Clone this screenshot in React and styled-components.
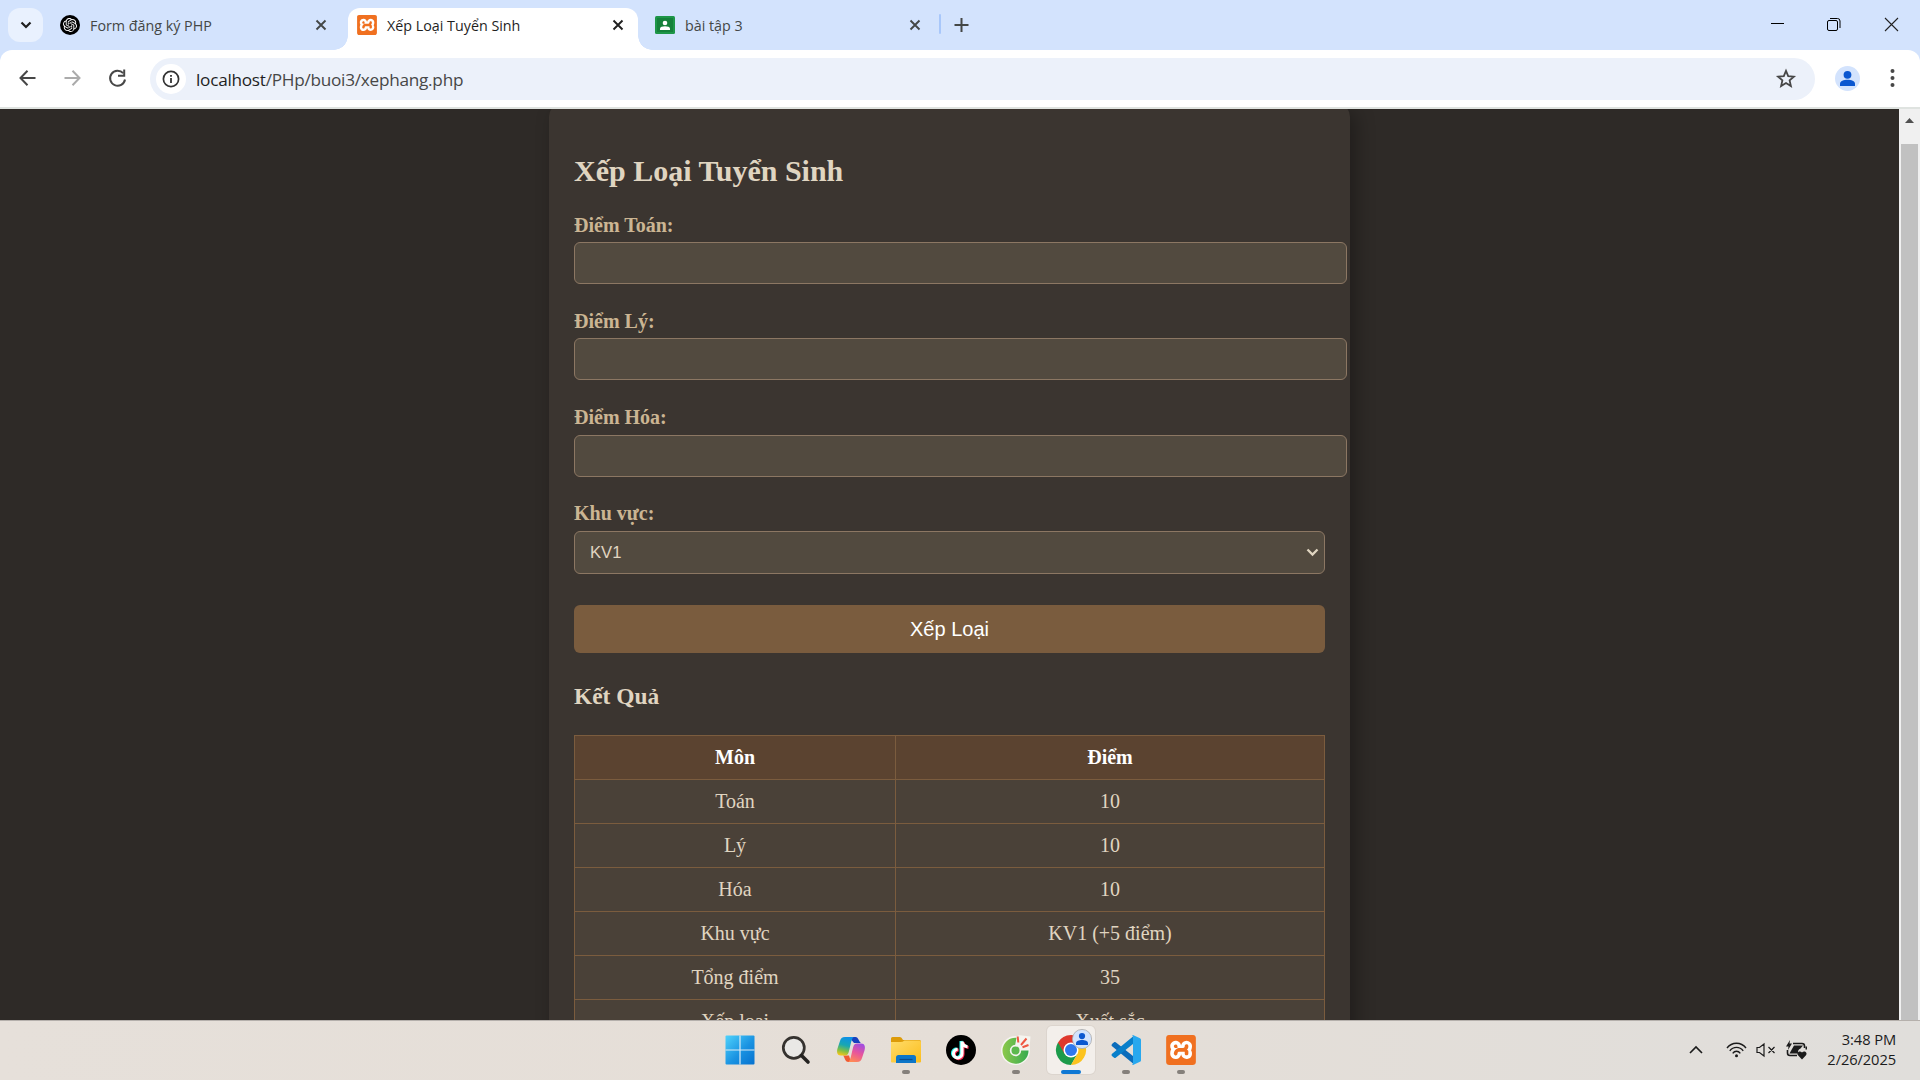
import React from 'react';
import styled, { createGlobalStyle } from 'styled-components';
import { SiOpenai, SiXampp } from 'react-icons/si';

const Global = createGlobalStyle`
  * { box-sizing: border-box; }
  body { margin: 0; overflow: hidden; }
`;
const ui = `"Open Sans", "Noto Sans", sans-serif`;
const serif = `"Liberation Serif", "Times New Roman", serif`;

const Screen = styled.div`
  width: 1920px; height: 1080px; display: flex; flex-direction: column; overflow: hidden;
  background: #d3e3fd; font-family: ${ui};
`;
const TabStrip = styled.header`
  height: 50px; flex: none; display: flex; align-items: flex-start; padding-left: 8px; background: #d3e3fd;
`;
const TabSearch = styled.button`
  width: 35px; height: 34px; margin: 8px 7px 0 0; padding: 0; border: 0; border-radius: 12px; background: #e9f1fe;
  display: flex; align-items: center; justify-content: center;
`;
const Tab = styled.div`
  position: relative; width: ${p => p.$w}px; height: 42px; margin-top: 8px; padding: 0 ${p => p.$end}px 8px ${p => p.$start}px;
  display: flex; align-items: center; border-radius: 12px 12px 0 0;
  background: ${p => (p.$active ? '#fff' : 'transparent')}; color: ${p => (p.$active ? '#1f1f1f' : '#444746')};
  &::before, &::after {
    content: ''; display: ${p => (p.$active ? 'block' : 'none')}; position: absolute; bottom: 0; width: 14px; height: 14px;
  }
  &::before { left: -14px; background: radial-gradient(circle at 0 0, transparent 13.5px, #fff 14px); }
  &::after { right: -14px; background: radial-gradient(circle at 100% 0, transparent 13.5px, #fff 14px); }
`;
const TabTitle = styled.span`
  flex: 1; margin-left: 10px; font-size: 14.3px; line-height: 20px; white-space: nowrap; padding-top: 1px;
`;
const Divider = styled.i`width: 2px; height: 20px; margin: 14px 0 0 0; background: #a8c7fa; border-radius: 1px;`;
const NewTab = styled.div`margin: 17px 0 0 13px; height: 16px; display: flex;`;
const WindowControls = styled.div`
  margin-left: auto; height: 50px; display: flex; align-items: flex-start; gap: 42px; padding: 17px 21px 0 0;
`;
const Toolbar = styled.nav`
  height: 59px; flex: none; display: flex; align-items: center; padding: 0 17px 2px 15px; background: #fff;
  border-bottom: 2px solid #dfe3e0; border-radius: 12px 12px 0 0;
`;
const NavIcons = styled.div`display: flex; gap: 20px; align-items: center; width: 135px;`;
const Omnibox = styled.div`
  width: 1665px; height: 42px; margin-top: 3px; border-radius: 21px; background: #ecf1fa; display: flex; align-items: center;
  padding: 0 18px 0 6px;
`;
const SiteInfo = styled.span`
  width: 30px; height: 30px; border-radius: 50%; background: #fff; display: flex; align-items: center; justify-content: center;
`;
const Url = styled.span`
  flex: 1; margin-left: 10px; font-size: 17.2px; letter-spacing: -0.26px; color: #474747; padding-top: 1px; b { font-weight: 400; color: #1f1f1f; }
`;
const Profile = styled.span`margin: 1px 0 0 20px; width: 25px; height: 25px; display: flex;`;
const Kebab = styled.span`margin: 1px 0 0 auto; display: flex;`;

const Viewport = styled.main`height: 911px; flex: none; display: flex; overflow: hidden; background: #2e2a27;`;
const Page = styled.div`flex: 1; display: flex; justify-content: center; align-items: flex-start; overflow: hidden;`;
const ScrollBar = styled.div`
  width: 21px; background: #f0f0f0; display: flex; flex-direction: column; align-items: center; padding-top: 9px;
`;
const Thumb = styled.i`width: 17px; flex: 1; margin-top: 21px; background: #c1c1c1;`;

const Card = styled.section`
  width: 801px; height: 1100px; flex: none; margin-top: -5px; padding: 25px; border-radius: 12.5px; background: #3b3530;
  box-shadow: 6px 6px 19px rgba(0, 0, 0, 0.3); font-family: ${serif}; color: #e0d5c1;
`;
const Title = styled.h2`margin: 25px 0 24.75px; font-size: 30px; line-height: 34px; font-weight: 700;`;
const Label = styled.label`
  display: block; padding-top: 0.75px; margin-bottom: 5.5px; font-size: 20px; line-height: 23px; font-weight: 700; color: #cbb593;
`;
const Input = styled.input`
  display: block; width: 773px; height: 42px; margin: 0 0 25px; border: 1px solid #8c7763; border-radius: 6px;
  background: #524a3f; padding: 0 15px; outline: none;
`;
const Select = styled.div`
  height: 43px; margin-bottom: 31px; border: 1px solid #8c7763; border-radius: 6px; background: #524a3f;
  display: flex; align-items: center; justify-content: space-between; padding: 1px 5px 0 15px;
  font: 16.67px "Liberation Sans", Arial, sans-serif; color: #e0d5c1;
`;
const Submit = styled.button`
  display: block; width: 100%; height: 48px; border: 0; border-radius: 6px; background: #7a5c3e; color: #fff;
  font: 20px "Liberation Sans", Arial, sans-serif; padding: 1px 0 0;
`;
const Subtitle = styled.h3`margin: 30px 0 25px; font-size: 23.4px; line-height: 27px; font-weight: 700;`;
const Table = styled.table`
  width: 751px; border-collapse: collapse; table-layout: fixed; font-size: 20px; line-height: 23px; text-align: center;
  th, td { height: 44px; padding: 1px 0 0; border: 1px solid #7b5c3e; }
  th { background: #5b4330; color: #fff; font-weight: 700; }
  td { background: #4a4138; }
  th:first-child { width: 321px; }
`;

const Taskbar = styled.footer`
  height: 60px; flex: none; display: flex; align-items: flex-start; border-top: 1px solid #b5b0ac;
  background: linear-gradient(90deg, #e6e0da, #e5ded7 50%, #e0dedb);
`;
const Apps = styled.div`display: flex; margin-left: 713px;`;
const AppSlot = styled.div`
  width: 48px; height: 48px; margin: 5px 3.5px 0; border-radius: 5px; display: flex; flex-direction: column; align-items: center;
  padding-top: 9px; background: ${p => (p.$active ? '#f3efeb' : 'transparent')};
  box-shadow: ${p => (p.$active ? '0 0 0 1px #dcd5ce' : 'none')};
  svg { flex: none; overflow: visible; }
  &::after {
    content: ''; height: 4px; margin-top: 5px; border-radius: 2px; flex: none;
    width: ${p => (p.$active ? 20 : p.$running ? 8 : 0)}px; background: ${p => (p.$active ? '#0f78d4' : '#85807b')};
  }
`;
const Tray = styled.div`margin-left: auto; height: 57px; display: flex; align-items: center; padding-right: 24px;`;
const TrayIcon = styled.span`display: flex; margin-right: ${p => p.$gap}px;`;
const Clock = styled.div`
  width: 88px; text-align: right; font-size: 14.7px; line-height: 20px; color: #1b1b1b; letter-spacing: -0.1px; padding: 0 0 1px;
`;
const XamppTile = styled.span`
  width: ${p => p.$size}px; height: ${p => p.$size}px; flex: none; display: flex; border-radius: ${p => p.$size / 8}px;
  background: linear-gradient(#fff, #fff) content-box; padding: ${p => p.$size / 12}px; color: #f07020;
  svg { width: ${p => p.$size}px; height: ${p => p.$size}px; margin: ${p => -p.$size / 12}px; }
`;
const GptBadge = styled.span`
  width: 20px; height: 20px; flex: none; border-radius: 50%; background: #000; color: #fff; display: flex;
  align-items: center; justify-content: center;
`;

const CloseX = ({ color = '#1f1f1f' }) => (
  <svg width="12" height="12" viewBox="0 0 12 12"><path d="M1.500 1.500l9 9M10.500 1.500l-9 9" stroke={color} strokeWidth="1.900" /></svg>
);
const Xampp = ({ size }) => <XamppTile $size={size}><SiXampp /></XamppTile>;
const Classroom = () => (
  <svg width="20" height="18" viewBox="0 0 20 18">
    <rect width="20" height="18" rx="1.500" fill="#1e9648" /><rect x="2" y="2" width="16" height="14" fill="#15813a" />
    <circle cx="10" cy="7" r="2.300" fill="#fff" /><path d="M5 14v-1.500c0-3 10-3 10 0V14z" fill="#fff" />
  </svg>
);
const Back = ({ flip, color }) => (
  <svg width="25" height="24" viewBox="0 0 25 24" transform={flip ? 'scale(-1 1)' : undefined}>
    <path d="M20.500 12H6M12.500 4.800L5.500 12l7 7.200" fill="none" stroke={color} strokeWidth="2" />
  </svg>
);
const Person = ({ size, ring }) => (
  <svg width={size} height={size} viewBox="0 0 25 25">
    <circle cx="12.500" cy="12.500" r={ring ? 12 : 12.5} fill="#d3e3fd" stroke={ring ? '#a9a9aa' : 'none'} />
    <circle cx="12.500" cy="8.800" r="3.900" fill="#0b57d0" /><path d="M5 20v-2.200c0-5.300 15-5.300 15 0V20z" fill="#0b57d0" />
  </svg>
);
const WindowsLogo = () => (
  <svg width="30" height="30" viewBox="0 0 30 30">
    <defs><linearGradient id="wg" x2="1" y2="1"><stop stopColor="#4fd2fb" /><stop offset=".55" stopColor="#1a93e2" /><stop offset="1" stopColor="#0671cf" /></linearGradient></defs>
    <rect x="-.5" y=".5" width="29" height="29" rx="1" fill="url(#wg)" /><path d="M14 .5v29M-.5 15h29" stroke="#dcecf5" strokeWidth="1.200" />
  </svg>
);
const SearchIcon = () => (
  <svg width="30" height="30" viewBox="0 0 30 30">
    <circle cx="12.800" cy="12.800" r="10.500" fill="#e9e8e6" stroke="#35322f" strokeWidth="2.700" /><path d="M20.500 20.500l6.500 6.500" stroke="#252321" strokeWidth="3.600" strokeLinecap="round" />
  </svg>
);
const Copilot = () => (
  <svg width="30" height="30" viewBox="0 0 30 30">
    <defs>
      <linearGradient id="ca" x1=".6" y1="0" x2=".35" y2="1"><stop stopColor="#0c8fe8" /><stop offset=".45" stopColor="#18a7b2" /><stop offset=".75" stopColor="#7cbe48" /><stop offset="1" stopColor="#f2c518" /></linearGradient>
      <linearGradient id="cb" x1=".7" y1="0" x2=".3" y2="1"><stop stopColor="#a14de0" /><stop offset=".5" stopColor="#e8559b" /><stop offset="1" stopColor="#ff8a55" /></linearGradient>
    </defs>
    <path d="M13 2h6.500c3 0 3.500 5 5.500 6h-7z" fill="#1740be" />
    <path d="M7 20.500h6l2 6.500h-2.500c-4 0-3.500-5-5.500-6.500z" fill="#f05a32" />
    <path d="M9 2h9c-3 0-4 13.500-6 17-1 1.500-2 1.500-5 1.500H5c-4 0-4.500-3.500-3.500-7L4 6c.8-2.500 2-4 5-4z" fill="url(#ca)" />
    <path d="M21 27h-9c3 0 4-13.500 6-17 1-1.500 2-1.500 5-1.500h2c4 0 4.500 3.500 3.500 7L26 23c-.8 2.500-2 4-5 4z" fill="url(#cb)" />
  </svg>
);
const Folder = () => (
  <svg width="30" height="30" viewBox="0 0 30 30">
    <defs><linearGradient id="fg" x2="1" y2="1"><stop stopColor="#ffdc6a" /><stop offset="1" stopColor="#fbbd1c" /></linearGradient></defs>
    <path d="M0 3.500Q0 2 1.500 2H9q1.500 0 3 3h16.500q1.500 0 1.500 1.500V12H0z" fill="#dd9b09" />
    <path d="M0 7h9.500q2 0 4-1.500H28.500q1.500 0 1.500 1.500v19.500q0 1-1 1H1q-1 0-1-1z" fill="url(#fg)" />
    <path d="M5 28v-5.500q0-2.500 2.500-2.500h15q2.500 0 2.500 2.500V28z" fill="#0d76c8" /><path d="M8.500 24.500h13" stroke="#0b4d8e" strokeWidth="1.200" />
  </svg>
);
const note = 'M16 6.500v12a4.300 4.300 0 1 1-4.300-4.200M16 6.500c.5 3.200 2.500 4.900 5.500 5.200';
const TikTok = () => (
  <svg width="30" height="30" viewBox="0 0 30 30">
    <circle cx="15" cy="15" r="15" fill="#000" />
    <g fill="none" strokeWidth="3"><path d={note} stroke="#25f4ee" transform="translate(-1 -.5)" /><path d={note} stroke="#fe2c55" transform="translate(1 .8)" /><path d={note} stroke="#fff" /></g>
  </svg>
);
const CocCoc = () => (
  <svg width="30" height="30" viewBox="0 0 30 30">
    <defs><linearGradient id="cc" x2="1"><stop stopColor="#8cc84b" /><stop offset="1" stopColor="#37ab50" /></linearGradient></defs>
    <circle cx="14.500" cy="15.500" r="14.500" fill="#f5f4ef" /><path d="M17 0l12.500 1.500-1 12z" fill="#f5f4ef" />
    <path d="M15.500 2.700A13 13 0 1 0 27.500 15.500h-7.300a5.700 5.700 0 1 1-6-5.700z" fill="url(#cc)" />
    <circle cx="14.500" cy="15.500" r="4" fill="#5cb94d" />
    <path d="M17.300 7.500l-.6-6M20 10L25.500 3.500M21.500 12.300l6-2.300" stroke="#ef5843" strokeWidth="2" />
  </svg>
);
const Chrome = () => (
  <svg width="30" height="30" viewBox="0 0 30 30">
    <path d="M2 7.500A15 15 0 0 0 15 30l6.500-11.300L15 15z" fill="#1d9b4b" />
    <path d="M28 7.500A15 15 0 0 1 15 30l6.500-11.300L15 8z" fill="#fcc31e" /><path d="M2 7.500L8.500 18.800 15 8h13.300A15 15 0 0 0 2 7.500z" fill="#df382d" />
    <circle cx="15" cy="15" r="7.500" fill="#fff" /><circle cx="15" cy="15" r="6" fill="#2f78ed" />
    <g transform="translate(16 -6)"><Person size={20} ring /></g>
  </svg>
);
const VSCode = () => (
  <svg width="30" height="30" viewBox="0 0 30 30">
    <path d="M1.500 8.500l2-1.400q.6-.3 1.200.2L22 21v7.500L.8 11q-1-1 .7-2.500z" fill="#0b6cbb" />
    <path d="M1.500 21.500l2 1.400q.6.300 1.200-.2L22 9V1.500L.8 19q-1 1 .7 2.500z" fill="#087fca" />
    <path d="M21 .2q.8-.4 1.500 0l6.500 3q1 .5 1 1.600v20.400q0 1.100-1 1.600l-6.500 3q-.7.400-1.500 0 1 0 1-1.700V1.900q0-1.700-1-1.700z" fill="#28a8ee" />
  </svg>
);

const rows = [['Toán', '10'], ['Lý', '10'], ['Hóa', '10'], ['Khu vực', 'KV1 (+5 điểm)'], ['Tổng điểm', '35'], ['Xếp loại', 'Xuất sắc']];
const XamppApp = () => <Xampp size={30} />;
const apps = [
  [WindowsLogo], [SearchIcon], [Copilot], [Folder, 1], [TikTok], [CocCoc, 1], [Chrome, 1, 1], [VSCode, 1], [XamppApp, 1],
];

export default function App() {
  return (
    <Screen>
      <Global />
      <TabStrip>
        <TabSearch><svg width="12" height="8" viewBox="0 0 12 8"><path d="M1.500 1.500L6 6l4.500-4.500" fill="none" stroke="#1f1f1f" strokeWidth="2.200" /></svg></TabSearch>
        <Tab $w={298} $start={10} $end={21}><GptBadge><SiOpenai size={14} /></GptBadge><TabTitle>Form đăng ký PHP</TabTitle><CloseX color="#444746" /></Tab>
        <Tab $w={290} $start={9} $end={14} $active><Xampp size={20} /><TabTitle>Xếp Loại Tuyển Sinh</TabTitle><CloseX /></Tab>
        <Tab $w={301} $start={17} $end={18}><Classroom /><TabTitle>bài tập 3</TabTitle><CloseX color="#444746" /></Tab>
        <Divider />
        <NewTab><svg width="15" height="16" viewBox="0 0 15 16"><path d="M7.500 1v14M.5 8h14" stroke="#444746" strokeWidth="2" /></svg></NewTab>
        <WindowControls>
          <svg width="15" height="15" viewBox="0 0 15 15"><path d="M1 6.500h13" stroke="#000" /></svg>
          <svg width="15" height="15" viewBox="0 0 15 15" fill="none" stroke="#000"><rect x=".5" y="3.500" width="10" height="10" rx="1.500" /><path d="M3 1.500h7.500q2.500 0 2.500 2.500V11" /></svg>
          <svg width="15" height="15" viewBox="0 0 15 15"><path d="M1 1l13 13M14 1L1 14" stroke="#222" strokeWidth="1.100" /></svg>
        </WindowControls>
      </TabStrip>
      <Toolbar>
        <NavIcons>
          <Back color="#474747" /><Back flip color="#ababab" />
          <svg width="25" height="24" viewBox="0 0 25 24"><path d="M18.200 7.200A7.500 7.500 0 1 0 20 13.500" fill="none" stroke="#474747" strokeWidth="2" /><path d="M19.200 3.500v6.300H13" fill="none" stroke="#474747" strokeWidth="2" /></svg>
        </NavIcons>
        <Omnibox>
          <SiteInfo><svg width="18" height="18" viewBox="0 0 18 18"><circle cx="9" cy="9" r="7.600" fill="none" stroke="#333" strokeWidth="1.700" /><path d="M9 8v5M9 5v1.800" stroke="#333" strokeWidth="1.800" /></svg></SiteInfo>
          <Url><b>localhost</b>/PHp/buoi3/xephang.php</Url>
          <svg width="22" height="22" viewBox="0 0 22 22"><path d="M11 2.800l2.200 5.300 5.700.5-4.300 3.800 1.300 5.700L11 15l-4.900 3.100 1.300-5.700-4.300-3.800 5.700-.5z" fill="none" stroke="#474747" strokeWidth="1.800" /></svg>
        </Omnibox>
        <Profile><Person size={25} /></Profile>
        <Kebab><svg width="21" height="20" viewBox="0 0 21 20" fill="#474747"><circle cx="10.500" cy="3" r="2" /><circle cx="10.500" cy="10" r="2" /><circle cx="10.500" cy="17" r="2" /></svg></Kebab>
      </Toolbar>
      <Viewport>
        <Page>
          <Card>
            <Title>Xếp Loại Tuyển Sinh</Title>
            {['Điểm Toán:', 'Điểm Lý:', 'Điểm Hóa:'].map(t => (
              <React.Fragment key={t}><Label>{t}</Label><Input aria-label={t} /></React.Fragment>
            ))}
            <Label>Khu vực:</Label>
            <Select>KV1<svg width="13" height="9" viewBox="0 0 13 9"><path d="M1.500 1.500l5 5 5-5" fill="none" stroke="#e0d5c1" strokeWidth="2.300" /></svg></Select>
            <Submit>Xếp Loại</Submit>
            <Subtitle>Kết Quả</Subtitle>
            <Table>
              <thead><tr><th>Môn</th><th>Điểm</th></tr></thead>
              <tbody>{rows.map(([a, b]) => <tr key={a}><td>{a}</td><td>{b}</td></tr>)}</tbody>
            </Table>
          </Card>
        </Page>
        <ScrollBar><svg width="9" height="5" viewBox="0 0 9 5"><path d="M0 5L4.500 0 9 5z" fill="#505050" /></svg><Thumb /></ScrollBar>
      </Viewport>
      <Taskbar>
        <Apps>{apps.map(([Icon, running, active], i) => <AppSlot key={i} $running={running} $active={active}><Icon /></AppSlot>)}</Apps>
        <Tray>
          <TrayIcon $gap={23}><svg width="14" height="9" viewBox="0 0 14 9"><path d="M1 8l6-6 6 6" fill="none" stroke="#1b1b1b" strokeWidth="1.600" /></svg></TrayIcon>
          <TrayIcon $gap={9}><svg width="21" height="16" viewBox="0 0 21 16" fill="none" stroke="#1b1b1b" strokeWidth="1.400"><path d="M1 6C6-.4 15-.4 20 6M3.800 8.800c3.500-4.600 9.900-4.600 13.400 0M6.700 11.400c2-2.800 5.600-2.800 7.600 0" /><circle cx="10.500" cy="13.800" r="1.500" fill="#1b1b1b" stroke="none" /></svg></TrayIcon>
          <TrayIcon $gap={10}><svg width="20" height="16" viewBox="0 0 20 16" fill="none" stroke="#1b1b1b" strokeWidth="1.200"><path d="M1 5.500v5h2.500L8 14V2L3.500 5.500zM12.500 5l6 6M18.500 5l-6 6" /></svg></TrayIcon>
          <TrayIcon $gap={0}><svg width="22" height="20" viewBox="0 0 22 20"><path d="M7 3.500h9q2.500 0 2.500 2.500v2M1.500 10v3q0 2.500 2.500 2.500h7" fill="none" stroke="#1b1b1b" strokeWidth="1.600" /><path d="M8 5.500h9l-2.500 3q-3 1-2.500 5H3.500L6 9zM4 0L0 6.500h2.500L2 10l4-6.500H3.500zM19.500 6.500h1.500v3h-1.500zM16 19.500l-4-4.200c-2-3 2-5.300 4-2.700 2-2.600 6-.3 4 2.700z" fill="#1b1b1b" /></svg></TrayIcon>
          <Clock>3:48 PM<br />2/26/2025</Clock>
        </Tray>
      </Taskbar>
    </Screen>
  );
}
